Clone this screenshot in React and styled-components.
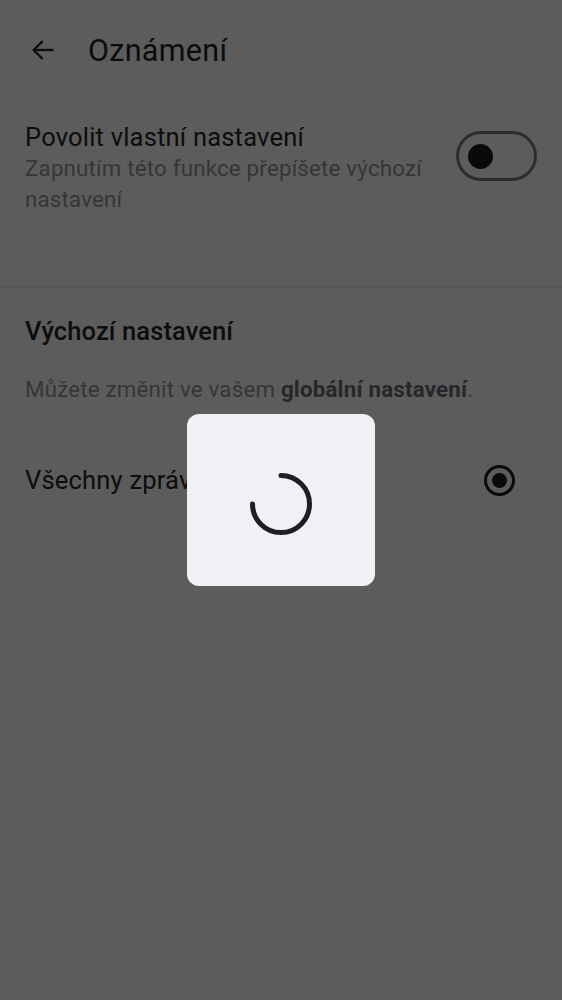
import React from 'react';
import styled, { createGlobalStyle } from 'styled-components';

const GlobalStyle = createGlobalStyle`
  html, body {
    margin: 0;
    padding: 0;
    background: #ffffff;
    font-family: Roboto, "Noto Sans", "Liberation Sans", sans-serif;
  }
`;

const Page = styled.div`
  width: 562px;
  min-height: 1000px;
  background: #ffffff;
`;

const Header = styled.div`
  display: flex;
  align-items: center;
  height: 100px;
  padding: 0 0 0 28px;
  gap: 30px;
`;

const BackButton = styled.button`
  background: none;
  border: none;
  padding: 0;
  width: 30px;
  height: 30px;
  display: flex;
  align-items: center;
  justify-content: center;
  color: #262626;
`;

const Title = styled.h1`
  margin: 0;
  font-size: 30.5px;
  font-weight: 400;
  color: #262626;
  letter-spacing: 0.3px;
`;

const CustomSection = styled.div`
  display: flex;
  justify-content: space-between;
  padding: 22px 25px 0 25px;
  height: 188px;
  box-sizing: border-box;
  border-bottom: 1px solid #ececec;
`;

const CustomText = styled.div`
  display: flex;
  flex-direction: column;
  max-width: 420px;
`;

const RowLabel = styled.div`
  font-size: 25.5px;
  color: #262626;
  line-height: 31px;
  letter-spacing: 0.2px;
`;

const RowHint = styled.div`
  font-size: 22.3px;
  color: #94979c;
  line-height: 31px;
  letter-spacing: 0.2px;
`;

const Toggle = styled.div`
  width: 81px;
  height: 50px;
  box-sizing: border-box;
  border: 3px solid #787d87;
  border-radius: 25px;
  display: flex;
  align-items: center;
  padding-left: 9px;
  margin-top: 9px;
  flex-shrink: 0;
`;

const Knob = styled.div`
  width: 25px;
  height: 25px;
  border-radius: 50%;
  background: #1c1c1c;
`;

const DefaultSection = styled.div`
  padding: 28px 25px 0 25px;
`;

const SectionTitle = styled.h2`
  margin: 0;
  font-size: 25.5px;
  font-weight: 500;
  color: #262626;
  line-height: 31px;
  letter-spacing: 0.1px;
`;

const Note = styled.p`
  margin: 27px 0 0;
  font-size: 22.3px;
  color: #94979c;
  line-height: 31px;
  letter-spacing: 0.2px;

  b {
    font-weight: 700;
    color: #6a6e74;
  }
`;

const OptionRow = styled.div`
  display: flex;
  justify-content: space-between;
  align-items: center;
  margin-top: 60px;
  padding-right: 22px;
`;

const Radio = styled.div`
  width: 31px;
  height: 31px;
  box-sizing: border-box;
  border: 3px solid #1c1c1c;
  border-radius: 50%;
  display: flex;
  align-items: center;
  justify-content: center;

  &::after {
    content: '';
    width: 15px;
    height: 15px;
    border-radius: 50%;
    background: #1c1c1c;
  }
`;

const Overlay = styled.div`
  position: fixed;
  inset: 0;
  background: rgba(0, 0, 0, 0.64);
  display: flex;
  align-items: center;
  justify-content: center;
`;

const LoaderBox = styled.div`
  width: 188px;
  height: 172px;
  border-radius: 12px;
  background: #f0f1f5;
  display: flex;
  align-items: center;
  justify-content: center;
  padding-top: 8px;
  box-sizing: border-box;
`;

function Spinner() {
  // arc: from 12 o'clock clockwise round to 9 o'clock
  return (
    <svg width="66" height="66" viewBox="0 0 66 66">
      <path
        d="M33 4.5 A28.5 28.5 0 1 1 4.5 33"
        fill="none"
        stroke="#1e1f22"
        strokeWidth="5"
        strokeLinecap="round"
      />
    </svg>
  );
}

function App() {
  return (
    <>
      <GlobalStyle />
      <Page>
        <Header>
          <BackButton>
            <svg width="28" height="28" viewBox="0 0 24 24" fill="none" stroke="currentColor" strokeWidth="2" strokeLinecap="square">
              <path d="M20 12H5" />
              <path d="M11 5l-7 7 7 7" />
            </svg>
          </BackButton>
          <Title>Oznámení</Title>
        </Header>
        <CustomSection>
          <CustomText>
            <RowLabel>Povolit vlastní nastavení</RowLabel>
            <RowHint>Zapnutím této funkce přepíšete výchozí nastavení</RowHint>
          </CustomText>
          <Toggle>
            <Knob />
          </Toggle>
        </CustomSection>
        <DefaultSection>
          <SectionTitle>Výchozí nastavení</SectionTitle>
          <Note>
            Můžete změnit ve vašem <b>globální nastavení</b>.
          </Note>
          <OptionRow>
            <RowLabel>Všechny zprávy</RowLabel>
            <Radio />
          </OptionRow>
        </DefaultSection>
      </Page>
      <Overlay>
        <LoaderBox>
          <Spinner />
        </LoaderBox>
      </Overlay>
    </>
  );
}

export default App;
